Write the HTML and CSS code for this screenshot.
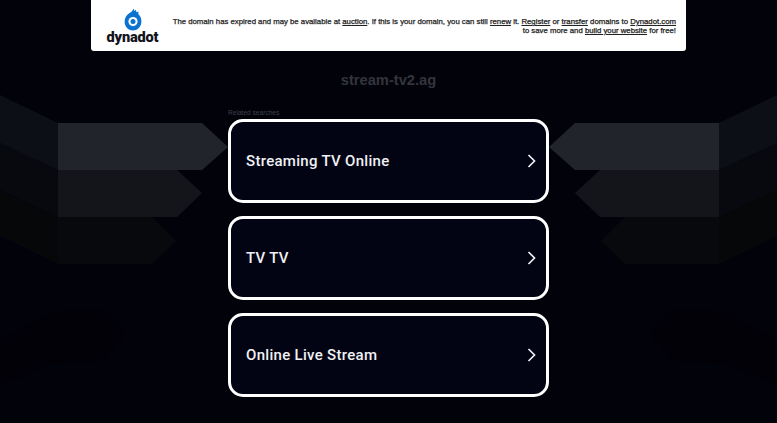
FILE: index.html
```html
<!DOCTYPE html>
<html lang="en">
  <head>
    <meta charset="UTF-8" />
    <meta name="viewport" content="width=device-width, initial-scale=1.0" />
    <title>stream-tv2.ag</title>
    <link rel="stylesheet" href="styles.css">
  </head>
  <body>
    <svg class="backdrop" viewBox="0 0 777 423" aria-hidden="true">
      <g id="arrows">
        <polygon fill="#010107" points="0,340 50,312 105,310 127,334 105,360 50,365 0,385" />
        <polygon fill="#060709" points="0,190 58,217 58,264 0,236" />
        <polygon fill="#08090d" points="58,217 152,217 176,241 152,264 58,264" />
        <polygon fill="#07090e" points="0,143 58,170 58,217 0,190" />
        <polygon fill="#14151a" points="58,170 177,170 202,193 177,217 58,217" />
        <polygon fill="#0d0f16" points="0,95 58,123 58,170 0,143" />
        <polygon fill="#22242c" points="58,123 202,123 228,147 202,170 58,170" />
      </g>
      <g transform="translate(777 0) scale(-1 1)">
        <polygon fill="#010107" points="0,340 50,312 105,310 127,334 105,360 50,365 0,385" />
        <polygon fill="#060709" points="0,190 58,217 58,264 0,236" />
        <polygon fill="#08090d" points="58,217 152,217 176,241 152,264 58,264" />
        <polygon fill="#07090e" points="0,143 58,170 58,217 0,190" />
        <polygon fill="#14151a" points="58,170 177,170 202,193 177,217 58,217" />
        <polygon fill="#0d0f16" points="0,95 58,123 58,170 0,143" />
        <polygon fill="#22242c" points="58,123 202,123 228,147 202,170 58,170" />
      </g>
    </svg>

    <div class="page">
      <div class="banner">
        <a class="logo" href="#">
          <svg class="logo-mark" viewBox="0 0 18 23" aria-hidden="true">
            <path fill="#0a72d0" d="M9.5 0.5 L10.5 3 L12 1.8 L12.4 4.2 L14.6 3.6 L14.2 6 C16.4 8 17.4 10.4 17.4 13.2 C17.4 18.4 13.8 22.4 8.9 22.4 C4 22.4 0.6 18.6 0.6 13.8 C0.6 9.6 3 6.6 6 4.8 C7.6 3.8 9 2.4 9.5 0.5 Z" />
            <circle cx="9" cy="13.6" r="4.6" fill="#fff" />
            <circle cx="9" cy="13.6" r="2.5" fill="#0a72d0" />
          </svg>
          <span class="logo-name">dynadot</span>
        </a>
        <p class="notice">
          The domain has expired and may be available at <a href="#">auction</a>. If this is your domain, you can still <a href="#">renew</a> it. <a href="#">Register</a> or <a href="#">transfer</a> domains to <a href="#">Dynadot.com</a><br />
          to save more and <a href="#">build your website</a> for free!
        </p>
      </div>

      <h1 class="domain">stream-tv2.ag</h1>

      <div class="related">
        <div class="related-title">Related searches</div>
        <a class="result" href="#">
          <span>Streaming TV Online</span>
          <svg class="chevron" viewBox="0 0 9 14" aria-hidden="true"><path d="M1.5 1 L7.5 7 L1.5 13" /></svg>
        </a>
        <a class="result" href="#">
          <span>TV TV</span>
          <svg class="chevron" viewBox="0 0 9 14" aria-hidden="true"><path d="M1.5 1 L7.5 7 L1.5 13" /></svg>
        </a>
        <a class="result" href="#">
          <span>Online Live Stream</span>
          <svg class="chevron" viewBox="0 0 9 14" aria-hidden="true"><path d="M1.5 1 L7.5 7 L1.5 13" /></svg>
        </a>
      </div>
    </div>
  </body>
</html>
```

FILE: styles.css
```css
html, body {
  margin: 0;
  height: 100%;
  overflow: hidden;
}
body {
  background-color: #02020b;
  font-family: "Liberation Sans", Arial, sans-serif;
}
.backdrop {
  position: absolute;
  top: 0;
  left: 0;
  width: 777px;
  height: 423px;
}
.page {
  position: relative;
  display: flex;
  flex-direction: column;
  align-items: center;
}
.banner {
  box-sizing: border-box;
  width: 595px;
  height: 51px;
  padding: 8px 10px 0 15px;
  display: flex;
  justify-content: space-between;
  background-color: #fff;
  border-radius: 0 0 3px 3px;
}
.logo {
  width: 53px;
  display: flex;
  flex-direction: column;
  align-items: center;
  color: #14141c;
  text-decoration: none;
}
.logo-mark {
  width: 18px;
  height: 23px;
  display: block;
}
.logo-name {
  margin-top: -1px;
  font-family: Roboto, sans-serif;
  font-size: 14.6px;
  font-weight: 900;
  line-height: 15px;
  letter-spacing: -0.2px;
}
.notice {
  margin: 9px 0 0;
  font-size: 7.77px;
  line-height: 9px;
  text-align: right;
  white-space: nowrap;
  color: #222;
  -webkit-text-stroke: 0.25px #222;
}
.notice a {
  color: #111;
  text-decoration: underline;
}
.domain {
  margin: 19px 0 0;
  font-size: 14.7px;
  line-height: 20px;
  font-weight: 700;
  color: #34353c;
}
.related {
  width: 321px;
  margin-top: 18px;
  display: flex;
  flex-direction: column;
  gap: 13px;
}
.related-title {
  margin-bottom: -11px;
  font-size: 6.6px;
  line-height: 9px;
  color: #3e404a;
}
.result {
  box-sizing: border-box;
  height: 84px;
  padding: 0 10px 0 15px;
  display: flex;
  align-items: center;
  justify-content: space-between;
  background-color: #020413;
  border: 3px solid #fff;
  border-radius: 15px;
  font-family: Roboto, sans-serif;
  font-size: 15px;
  font-weight: 500;
  letter-spacing: 0.3px;
  color: #f0f1f5;
  text-decoration: none;
}
.chevron {
  width: 9px;
  height: 14px;
  fill: none;
  stroke: #eef0f4;
  stroke-width: 1.7;
}
```
